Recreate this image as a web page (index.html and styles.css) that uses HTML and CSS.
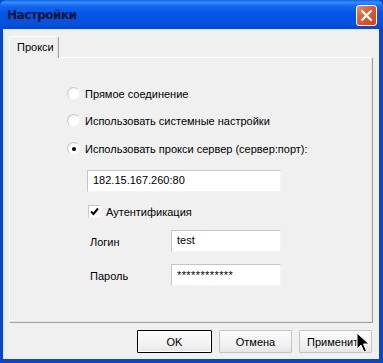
FILE: index.html
```html
<!DOCTYPE html>
<html lang="ru">
<head>
<meta charset="utf-8">
<title>Настройки</title>
<link rel="stylesheet" href="styles.css">
</head>
<body>
<div class="window">
  <div class="titlebar">
    <span class="title">Настройки</span>
    <button class="close" aria-label="Закрыть">
      <svg width="13" height="13" viewBox="0 0 13 13"><path d="M2 2 L11 11 M11 2 L2 11" stroke="#fff" stroke-width="2.4" stroke-linecap="round"/></svg>
    </button>
  </div>
  <div class="client">
    <div class="tabs">
      <div class="tab">Прокси</div>
    </div>
    <div class="panel">
      <div class="radio-row r1"><span class="radio"></span><span>Прямое соединение</span></div>
      <div class="radio-row r2"><span class="radio"></span><span>Использовать системные настройки</span></div>
      <div class="radio-row r3"><span class="radio checked"></span><span>Использовать прокси сервер (сервер:порт):</span></div>
      <div class="field address">182.15.167.260:80</div>
      <div class="check-row"><span class="checkbox"><svg width="9" height="9" viewBox="0 0 9 9"><path d="M1 4.5 L3.5 7 L8 1.5" stroke="#000" stroke-width="2" fill="none"/></svg></span><span>Аутентификация</span></div>
      <div class="form-row login"><span class="label">Логин</span><div class="field small">test</div></div>
      <div class="form-row pass"><span class="label">Пароль</span><div class="field small stars">************</div></div>
    </div>
    <div class="buttons">
      <button class="btn default">OK</button>
      <button class="btn">Отмена</button>
      <button class="btn">Применить</button>
    </div>
    <svg class="cursor" width="14" height="22" viewBox="0 0 14 22"><path d="M1 1 L1 17 L5 13 L8 20 L10.5 19 L7.5 12 L13 12 Z" fill="#000" stroke="#fff" stroke-width="1"/></svg>
  </div>
</div>
</body>
</html>
```
FILE: styles.css
```css
* { box-sizing: border-box; }
html, body { margin: 0; padding: 0; }
body {
  width: 383px;
  height: 363px;
  overflow: hidden;
  font-family: "Liberation Sans", Arial, sans-serif;
  font-size: 11px;
  color: #000;
}
.window {
  width: 383px;
  height: 363px;
  background: #0846d0;
  display: flex;
  flex-direction: column;
  padding: 0 4px 4px 3px;
}
.titlebar {
  height: 29px;
  margin: 0 -4px 0 -3px;
  padding: 0 6px 0 7px;
  display: flex;
  align-items: center;
  justify-content: space-between;
  background: linear-gradient(#0a62ef 0%, #3b8dfb 8%, #1568f0 20%, #0556e6 45%, #0452de 80%, #0448cc 100%);
  border-radius: 6px 6px 0 0;
}
.title {
  font-family: "DejaVu Sans", sans-serif;
  font-weight: bold;
  font-size: 12px;
  letter-spacing: -0.5px;
  color: #0a1646;
  text-shadow: 1px 1px 0 #1a4fb8;
  margin-top: 1px;
}
.close {
  width: 21px;
  height: 21px;
  margin-top: 2px;
  padding: 0;
  border: 1px solid #fff;
  border-radius: 3px;
  background: linear-gradient(135deg, #f08a66 0%, #e2582f 45%, #cf4420 100%);
  display: flex;
  align-items: center;
  justify-content: center;
}
.client {
  position: relative;
  flex: 1;
  background: #f0f0f0;
  padding: 7px 7px 0 6px;
  display: flex;
  flex-direction: column;
}
.tabs {
  display: flex;
  height: 21px;
}
.tab {
  position: relative;
  z-index: 1;
  width: 50px;
  height: 22px;
  padding: 4px 0 0 7px;
  background: #f0f0f0;
  border-top: 1px solid #fff;
  border-left: 1px solid #fff;
  border-right: 1px solid #a0a0a0;
  border-radius: 2px 2px 0 0;
  box-shadow: inset -1px 0 0 #e3e3e3;
}
.panel {
  width: 364px;
  height: 266px;
  border-top: 1px solid #fff;
  border-left: 1px solid #fff;
  border-right: 1px solid #a0a0a0;
  border-bottom: 1px solid #a0a0a0;
  box-shadow: inset -1px -1px 0 #e3e3e3;
  padding: 29px 0 0 57px;
  display: flex;
  flex-direction: column;
}
.radio-row {
  display: flex;
  align-items: center;
  height: 13px;
  gap: 5px;
}
.r2 { margin-top: 14px; }
.r3 { margin-top: 15px; }
.radio {
  width: 13px;
  height: 13px;
  border-radius: 50%;
  background: radial-gradient(circle at 60% 60%, #fff 40%, #ececec 100%);
  border: 1px solid;
  border-color: #c8c8c8 #f4f4f4 #f4f4f4 #c8c8c8;
  display: flex;
  align-items: center;
  justify-content: center;
  flex: none;
}
.radio.checked::after {
  content: "";
  width: 4px;
  height: 4px;
  border-radius: 50%;
  background: #000;
}
.field {
  background: #fff;
  border-top: 1px solid #c5c5c5;
  border-left: 1px solid #c5c5c5;
  border-right: 1px solid #f4f4f4;
  border-bottom: 1px solid #f4f4f4;
  height: 22px;
  padding: 3px 0 0 5px;
}
.address {
  width: 194px;
  margin: 15px 0 0 20px;
}
.check-row {
  display: flex;
  align-items: center;
  gap: 5px;
  height: 13px;
  margin: 13px 0 0 21px;
}
.checkbox {
  width: 13px;
  height: 13px;
  background: #fff;
  border: 1px solid;
  border-color: #c8c8c8 #f4f4f4 #f4f4f4 #c8c8c8;
  display: flex;
  align-items: center;
  justify-content: center;
  flex: none;
}
.form-row {
  display: flex;
  align-items: center;
  margin: 12px 0 0 23px;
}
.login { margin-top: 12px; }
.pass { margin-top: 12px; }
.label {
  width: 81px;
  padding-top: 2px;
}
.small {
  width: 110px;
}
.stars {
  padding-top: 4px;
  letter-spacing: 0.4px;
}
.buttons {
  display: flex;
  justify-content: flex-end;
  gap: 7px;
  margin-top: 7px;
}
.btn {
  font-family: "Liberation Sans", Arial, sans-serif;
  font-size: 11px;
  color: #000;
  width: 73px;
  height: 23px;
  padding: 0;
  background: linear-gradient(#fbfbfb, #f0f0f0 70%, #e6e6e6);
  border: 1px solid #c4c4c4;
  border-radius: 1px;
}
.btn.default {
  width: 75px;
  border: 1px solid #000;
  box-shadow: inset 0 0 0 1px #fff;
}
.cursor {
  position: absolute;
  right: 9px;
  bottom: 5px;
}
```
